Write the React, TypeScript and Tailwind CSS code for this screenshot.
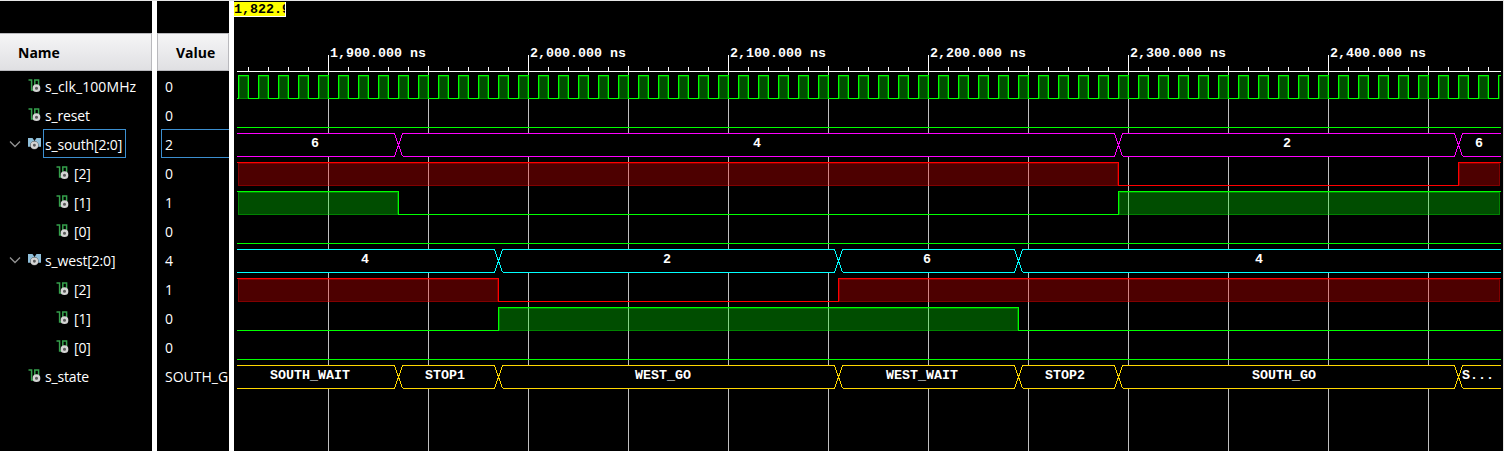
import React from "react";

type Segment = { from: number; to: number; high: boolean };
type Bus = { color: string; row: number; cuts: number[]; labels: [number, string][] };

const START = 237;
const END = 1501;
const top = (row: number) => 75 + 29 * row;
const bottom = (row: number) => 98 + 29 * row;

const names = [
  { label: "s_clk_100MHz", value: "0", kind: "signal", spacing: "tracking-[0.1px]" },
  { label: "s_reset", value: "0", kind: "signal" },
  { label: "s_south[2:0]", value: "2", kind: "bus", selected: true },
  { label: "[2]", value: "0", kind: "child" },
  { label: "[1]", value: "1", kind: "child" },
  { label: "[0]", value: "0", kind: "child" },
  { label: "s_west[2:0]", value: "4", kind: "bus" },
  { label: "[2]", value: "1", kind: "child" },
  { label: "[1]", value: "0", kind: "child" },
  { label: "[0]", value: "0", kind: "child" },
  { label: "s_state", value: "SOUTH_G", kind: "signal" },
];

const buses: Bus[] = [
  {
    color: "#ff00ff",
    row: 2,
    cuts: [398, 1118, 1458],
    labels: [[311, "6"], [753, "4"], [1283, "2"], [1475, "6"]],
  },
  {
    color: "#00ffff",
    row: 6,
    cuts: [498, 838, 1018],
    labels: [[361, "4"], [663, "2"], [923, "6"], [1255, "4"]],
  },
  {
    color: "#ffd700",
    row: 10,
    cuts: [398, 498, 838, 1018, 1118, 1458],
    labels: [
      [270, "SOUTH_WAIT"],
      [425, "STOP1"],
      [635, "WEST_GO"],
      [886, "WEST_WAIT"],
      [1045, "STOP2"],
      [1252, "SOUTH_GO"],
      [1462, "S..."],
    ],
  },
];

const clock: Segment[] = Array.from({ length: 127 }, (_, i) => ({
  from: 238 + i * 10,
  to: Math.min(248 + i * 10, END),
  high: i % 2 === 0,
}));

const bits: { row: number; color: string; segments: Segment[] }[] = [
  { row: 0, color: "#00ff00", segments: clock },
  { row: 1, color: "#00ff00", segments: [{ from: 238, to: END, high: false }] },
  {
    row: 3,
    color: "#ff0000",
    segments: [
      { from: 238, to: 1118, high: true },
      { from: 1118, to: 1458, high: false },
      { from: 1458, to: END, high: true },
    ],
  },
  {
    row: 4,
    color: "#00ff00",
    segments: [
      { from: 238, to: 398, high: true },
      { from: 398, to: 1118, high: false },
      { from: 1118, to: END, high: true },
    ],
  },
  { row: 5, color: "#00ff00", segments: [{ from: 238, to: END, high: false }] },
  {
    row: 7,
    color: "#ff0000",
    segments: [
      { from: 238, to: 498, high: true },
      { from: 498, to: 838, high: false },
      { from: 838, to: END, high: true },
    ],
  },
  {
    row: 8,
    color: "#00ff00",
    segments: [
      { from: 238, to: 498, high: false },
      { from: 498, to: 1018, high: true },
      { from: 1018, to: END, high: false },
    ],
  },
  { row: 9, color: "#00ff00", segments: [{ from: 238, to: END, high: false }] },
];

function SignalIcon() {
  return (
    <svg className="h-[14px] w-[13px] shrink-0" viewBox="0 0 13 14" fill="none">
      <path d="M0.5 0.9H3.6V10.9H6.8V0.9H10.6V6" stroke="#35a04c" strokeWidth="1.5" />
      <circle cx="8.5" cy="9.2" r="2.7" fill="#5a5a5a" stroke="#d4d4d4" strokeWidth="2.3" />
    </svg>
  );
}

function BusIcon() {
  return (
    <svg className="h-[14px] w-[13px] shrink-0" viewBox="0 0 13 14" fill="none">
      <path d="M0 1H4.5L6.5 4L8.5 1H13V9.8H0Z" fill="#8fbfda" />
      <circle cx="6.4" cy="8.3" r="3.4" fill="#5a5a5a" stroke="#4a4a4a" strokeWidth="1.6" />
      <circle cx="6.4" cy="8.3" r="2.6" fill="#5a5a5a" stroke="#d4d4d4" strokeWidth="2.3" />
    </svg>
  );
}

function Chevron() {
  return (
    <svg className="h-[8px] w-[12px]" viewBox="0 0 12 8" fill="none">
      <path d="M1 1.5L6 6.5L11 1.5" stroke="#929292" strokeWidth="1.3" />
    </svg>
  );
}

function BitTrace({ row, color, segments }: { row: number; color: string; segments: Segment[] }) {
  const hi = top(row) + 0.5;
  const lo = bottom(row) + 0.5;
  const first = segments[0];
  const isClock = row === 0;
  let d = `M${START} ${first.high && !isClock ? hi : lo}`;
  if (isClock) d += "H238.5";
  segments.forEach((s, i) => {
    const y = s.high ? hi : lo;
    if (i > 0 || isClock) d += `V${y}`;
    d += `H${s.to === END ? END : s.to + 0.5}`;
  });
  return (
    <g>
      {segments
        .filter((s) => s.high)
        .map((s) => {
          const right = s.to === END ? 1499 : s.to;
          return (
            <g key={s.from}>
              <rect x={s.from} y={top(row)} width={right - s.from + 1} height={24} fill={color} fillOpacity={0.3} />
              {right - s.from > 2 && (
                <rect
                  x={s.from + (s.from === 238 && !isClock ? 0.5 : 1.5)}
                  y={top(row) + 1.5}
                  width={right - s.from - (s.from === 238 && !isClock ? 0 : 1) - (s.to === END ? 0 : 1)}
                  height={22}
                  fill="none"
                  stroke={color}
                  strokeOpacity={0.3}
                />
              )}
            </g>
          );
        })}
      <path d={d} fill="none" stroke={color} />
    </g>
  );
}

function BusTrace({ color, row, cuts, labels }: Bus) {
  const hi = top(row) + 0.5;
  const lo = bottom(row) + 0.5;
  let upper = `M${START} ${hi}`;
  let lower = `M${START} ${lo}`;
  cuts.forEach((c) => {
    upper += `H${c - 3.5}L${c + 4.5} ${lo}M${c + 4.5} ${hi}`;
    lower += `H${c - 3.5}L${c + 4.5} ${hi}M${c + 4.5} ${lo}`;
  });
  return (
    <g>
      <rect x={START} y={top(row)} width={END - START} height={24} fill="#000" />
      <path d={`${upper}H${END}${lower}H${END}`} fill="none" stroke={color} />
      {labels.map(([x, label]) => (
        <text key={x} x={x} y={top(row) + 14}>
          {label}
        </text>
      ))}
    </g>
  );
}

function Waveforms() {
  const ticks = Array.from({ length: 63 }, (_, i) => 248 + i * 20);
  const grid = Array.from({ length: 12 }, (_, i) => 328 + i * 100);
  return (
    <svg
      className="block h-[450px] w-[1269px] fill-white font-['Liberation_Mono','Courier_New',monospace] text-[13.33px] font-bold"
      viewBox="234 1 1269 450"
      shapeRendering="crispEdges"
    >
      {grid.map((x) => (
        <rect key={x} x={x} y={72} width={1} height={379} fill="#c0c0c0" />
      ))}
      {ticks.map((x) => (
        <rect key={x} x={x} y={67} width={1} height={4} fill="#fff" />
      ))}
      {grid.map((x, i) => (
        <rect key={x} x={x} y={i % 2 === 0 ? 55 : 66} width={1} height={i % 2 === 0 ? 17 : 6} fill="#fff" />
      ))}
      <rect x={START} y={71} width={END - START} height={1} fill="#fff" />
      {["1,900", "2,000", "2,100", "2,200", "2,300", "2,400"].map((t, i) => (
        <text key={t} x={330 + i * 200} y={57}>
          {t}.000 ns
        </text>
      ))}
      {bits.map((b) => (
        <BitTrace key={b.row} {...b} />
      ))}
      {buses.map((b) => (
        <BusTrace key={b.row} {...b} />
      ))}
    </svg>
  );
}

const headerClass =
  "h-[38px] shrink-0 border-t border-r border-b border-[#b9b9bd] bg-linear-to-b from-[#f5f5f6] to-[#e0e0e3] text-[14px] leading-[38px] font-bold text-black";

export default function App() {
  return (
    <div className="flex h-[451px] w-[1504px] overflow-hidden border-t border-r border-[#e6e6e6] bg-black font-['Open_Sans','Noto_Sans',sans-serif] text-[14px] text-white">
      <div className="flex w-[152px] shrink-0 flex-col pt-8">
        <div className={`${headerClass} pl-[18px]`}>Name</div>
        {names.map((n, i) => (
          <div key={i} className="flex h-[29px] shrink-0 items-center">
            <div className={n.kind === "child" ? "w-14 shrink-0" : "flex w-7 shrink-0 items-center pl-[9px]"}>
              {n.kind === "bus" && <Chevron />}
            </div>
            <div className="flex h-[29px] items-start pt-[8px]">{n.kind === "bus" ? <BusIcon /> : <SignalIcon />}</div>
            <div
              className={`flex h-[29px] items-center whitespace-nowrap border pl-px ${n.spacing ?? "tracking-[-0.15px]"} ${
                n.kind === "child" ? "ml-[3px]" : "ml-[2px]"
              } ${n.selected ? "w-[83px] border-[#3c8fd0]" : "border-transparent"}`}
            >
              <span className="relative top-px">{n.label}</span>
            </div>
          </div>
        ))}
      </div>
      <div className="w-[5px] shrink-0 bg-white" />
      <div className="flex w-[72px] shrink-0 flex-col overflow-hidden pt-8">
        <div className={`${headerClass} border-l pl-[18px]`}>Value</div>
        {names.map((n, i) => (
          <div
            key={i}
            className={`ml-1 flex h-[29px] shrink-0 items-center border-y border-l pl-[3px] whitespace-nowrap ${
              n.selected ? "border-[#3c8fd0]" : "border-transparent"
            }`}
          >
            <span className="relative top-px">{n.value}</span>
          </div>
        ))}
      </div>
      <div className="w-[5px] shrink-0 bg-white" />
      <div className="relative w-[1269px] shrink-0">
        <Waveforms />
        <div className="absolute top-px left-0 h-[15px] w-[52px] overflow-hidden border-r border-b border-white bg-[#ffff00] font-['Liberation_Mono','Courier_New',monospace] text-[13.33px] leading-[15px] font-bold text-black">
          1,822.9
        </div>
      </div>
    </div>
  );
}
